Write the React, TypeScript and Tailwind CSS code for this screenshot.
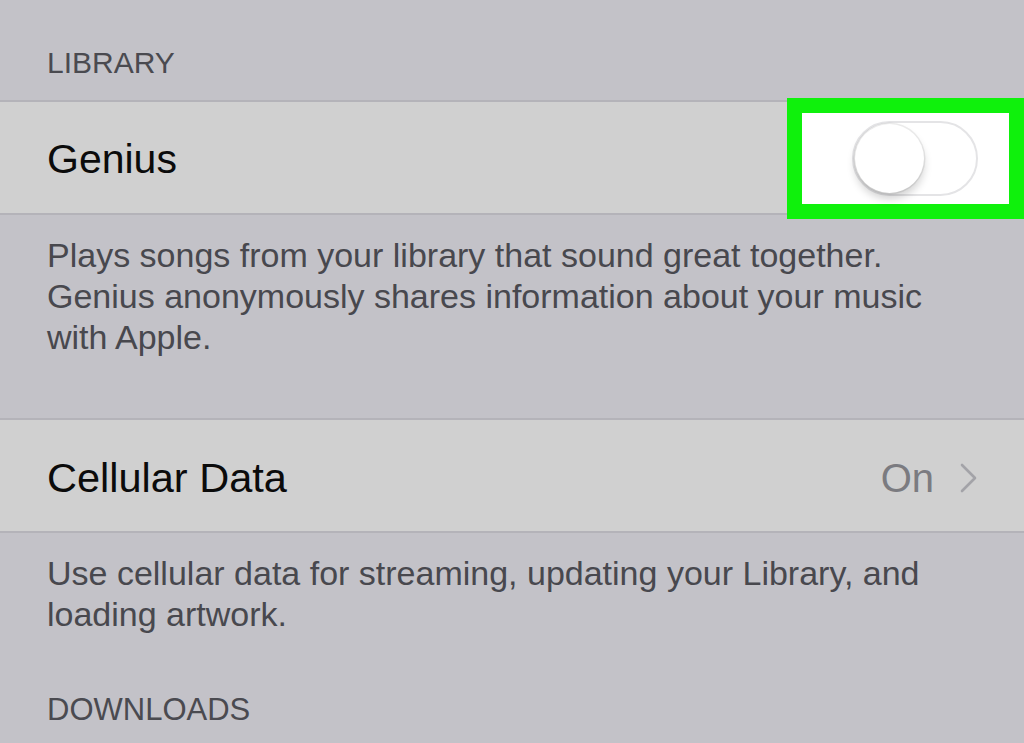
const font = { fontFamily: '"Liberation Sans", Arial, sans-serif' };

function SectionHeader({ title, className }: { title: string; className: string }) {
  return (
    <div className={`flex items-end px-[47px] ${className}`}>
      <span className="text-[30px] leading-[30px] text-[#4a4a50]">{title}</span>
    </div>
  );
}

function Footer({ lines, className }: { lines: string[]; className: string }) {
  return (
    <div className={`px-[47px] text-[34px] leading-[41px] text-[#48484e] ${className}`}>
      {lines.map((line) => (
        <div key={line}>{line}</div>
      ))}
    </div>
  );
}

function Chevron() {
  return (
    <svg width="17" height="30" viewBox="0 0 17 30" fill="none" className="ml-[26px]">
      <polyline
        points="2,2 15,15 2,28"
        stroke="#a3a3a8"
        strokeWidth="2.6"
        strokeLinecap="round"
        strokeLinejoin="round"
      />
    </svg>
  );
}

function GeniusToggle() {
  return (
    <div className="absolute right-0 top-[-4px] flex h-[121px] w-[237px] items-center border-[15px] border-[#0ff10c] bg-white pl-[50px]">
      <div className="relative h-[75px] w-[126px] rounded-full border-2 border-[#e4e4e6] bg-white">
        <div className="absolute left-[1px] top-[1px] h-[69px] w-[69px] rounded-full bg-white shadow-[0_6px_8px_rgba(0,0,0,0.18),0_0_0_1.5px_rgba(0,0,0,0.07)]" />
      </div>
    </div>
  );
}

export default function App() {
  return (
    <div className="h-[743px] w-[1024px] overflow-hidden bg-[#c3c2c8]" style={font}>
      <SectionHeader title="LIBRARY" className="h-[100px] pb-[22px]" />

      <div className="relative flex h-[115px] items-center border-y-2 border-[#b4b3b9] bg-[#d0d0d0] px-[47px] pt-[5px]">
        <span className="text-[41px] text-[#0b0b0b]">Genius</span>
        <GeniusToggle />
      </div>

      <Footer
        className="h-[203px] pt-[20px]"
        lines={[
          "Plays songs from your library that sound great together.",
          "Genius anonymously shares information about your music",
          "with Apple.",
        ]}
      />

      <div className="flex h-[115px] items-center border-y-2 border-[#b4b3b9] bg-[#d0d0d0] pl-[47px] pr-[47px] pt-[5px]">
        <span className="text-[41.5px] text-[#0b0b0b]">Cellular Data</span>
        <span className="ml-auto text-[40px] text-[#7b7b80]">On</span>
        <Chevron />
      </div>

      <Footer
        className="h-[161px] pt-[20px]"
        lines={["Use cellular data for streaming, updating your Library, and", "loading artwork."]}
      />

      <div className="px-[47px] text-[31px] leading-[31px] text-[#4a4a50]">DOWNLOADS</div>
    </div>
  );
}
